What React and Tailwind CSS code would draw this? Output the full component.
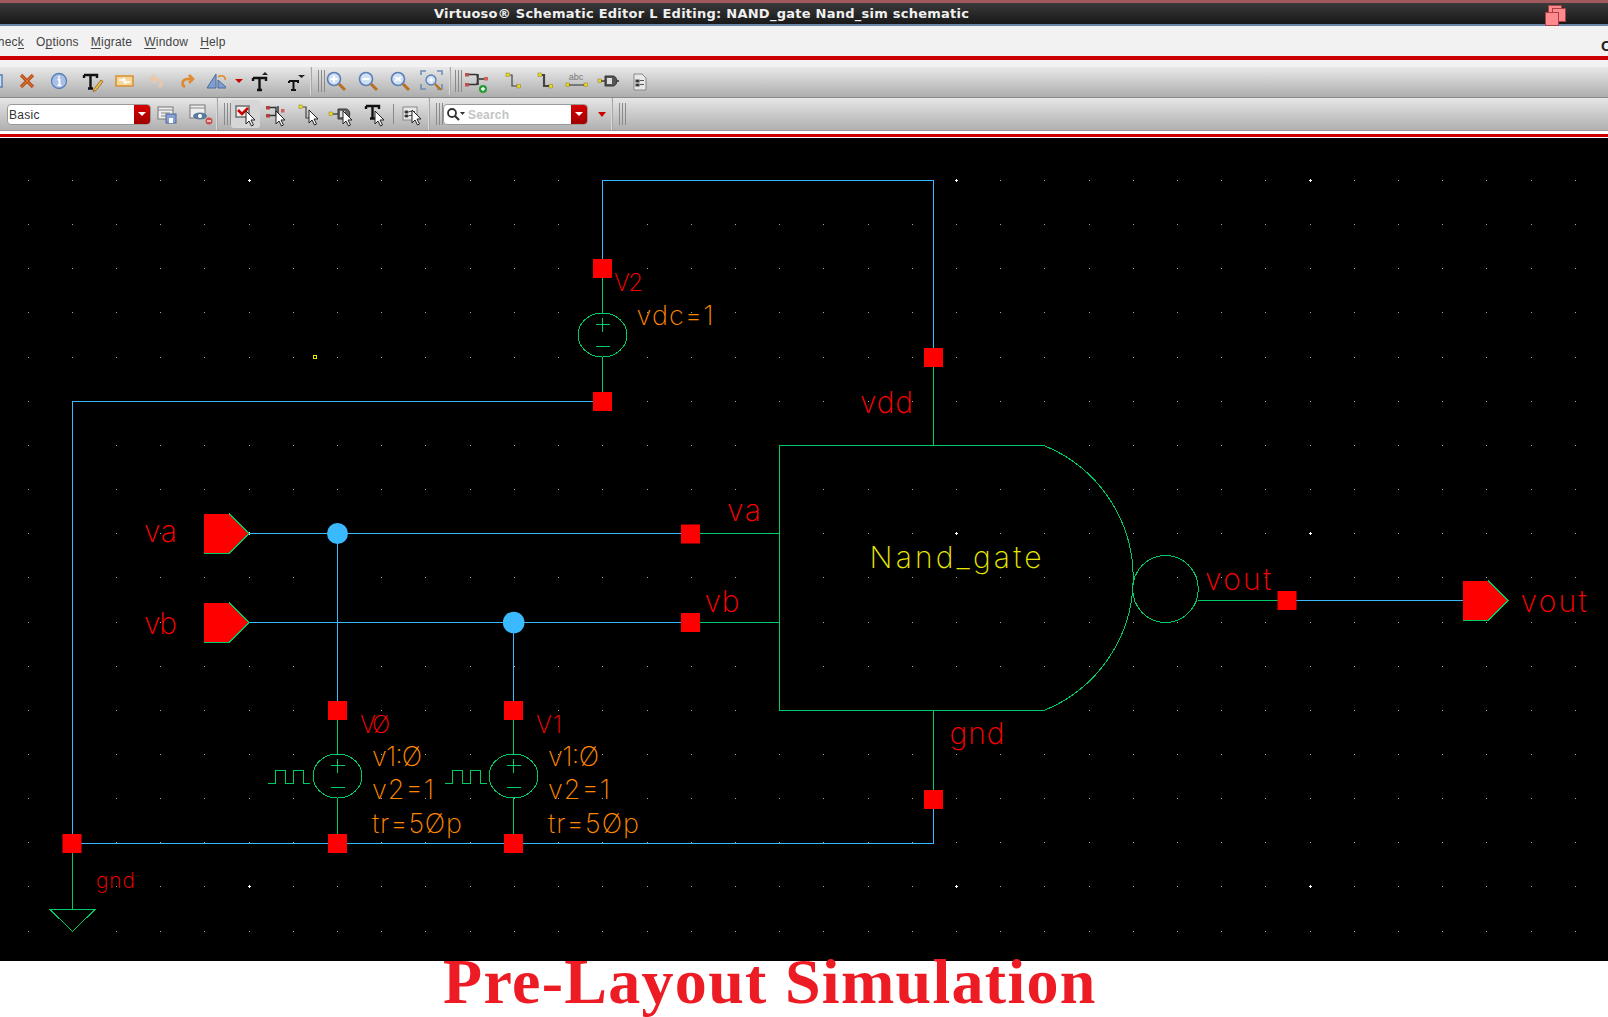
import React from "react";

const BLUE = "#3bb9ff";
const GREEN = "#00cc66";
const RED = "#ff0000";
const ORANGE = "#ff8800";

const Ico = ({ w = 32, h = 30, children, className = "" }) => (
  <svg width={w} height={h} viewBox={`0 0 ${w} ${h}`} className={"shrink-0 " + className}>
    {children}
  </svg>
);

const Grip = () => (
  <div className="flex gap-[2px] h-[22px] shrink-0">
    <div className="w-px bg-[#8a8a8a]" />
    <div className="w-px bg-[#8a8a8a]" />
    <div className="w-px bg-[#8a8a8a]" />
  </div>
);

const Sep = () => <div className="w-[2px] self-stretch bg-[#d9d9d9] border-r border-[#a8a8a8] shrink-0" />;

const Arrow = ({ x = 11, y = 12 }) => (
  <path
    transform={`translate(${x} ${y})`}
    d="M0 0 L0 13 L3 10 L5.5 15 L7.5 14 L5 9 L9 9 Z"
    fill="#fff"
    stroke="#222"
    strokeWidth="1"
  />
);

const Pt = ({ x, y }) => <rect x={x} y={y} width="3.5" height="3.5" fill="#e8d820" stroke="#8a8020" strokeWidth="0.5" />;

const Zoom = ({ kind }) => (
  <Ico>
    <circle cx="13" cy="13" r="6.5" fill="#cfe0f5" stroke="#5a7fb5" strokeWidth="1.6" />
    {kind === "in" && <path d="M9.5 13h7M13 9.5v7" stroke="#fff" strokeWidth="2.2" />}
    {kind === "out" && <path d="M9.5 13h7" stroke="#fff" strokeWidth="2.2" />}
    {kind === "fit" && <path d="M10 11l6 4M10 15l6-4" stroke="#fff" strokeWidth="1.6" />}
    <path d="M18 18l6 6" stroke="#b87020" strokeWidth="3" />
  </Ico>
);

const Toolbar1 = () => (
  <div className="flex items-center h-[31px] pb-[2px] border-b border-[#8a8a8a] bg-gradient-to-b from-[#e9e9e9] to-[#adadad] overflow-hidden">
    <div className="flex items-center ml-[-21px]">
      <Ico>
        <rect x="9" y="9" width="14" height="12" fill="#cfe0f5" stroke="#5a7fb5" strokeWidth="1.5" />
        <path d="M17 12h4v5h-4z" fill="#7fa0d0" />
      </Ico>
      <Ico>
        <path d="M10 9l12 12M22 9L10 21" stroke="#b8501a" strokeWidth="3.2" />
        <path d="M10 9l12 12M22 9L10 21" stroke="#e07a3a" strokeWidth="1" />
      </Ico>
      <Ico w={33}>
        <circle cx="16" cy="15" r="7.5" fill="#a8bfe8" stroke="#5a7fb5" strokeWidth="1.3" />
        <path d="M16 10v1.8M14.5 13.5H16.5V19M14.5 19.3h4" stroke="#fff" strokeWidth="1.8" fill="none" />
      </Ico>
      <Ico>
        <path d="M8 9h13v3M14.5 9v13M12 22.5h5M8 9v3" stroke="#111" strokeWidth="2.4" fill="none" />
        <path d="M18 23l7-9 2 1.5-7 9-3 1z" fill="#f0c040" stroke="#8a5a20" strokeWidth="0.8" />
      </Ico>
      <Ico>
        <rect x="8" y="10" width="17" height="10" fill="#f6d79a" stroke="#d88a2a" strokeWidth="1.4" />
        <path d="M11 14h6l-2-2M22 16h-6l2 2" stroke="#fff" strokeWidth="1.4" fill="none" />
      </Ico>
      <Ico>
        <path d="M19 21c4-2 3-8-3-8h-4M15 9l-4 4 4 4" stroke="#e8c8a8" strokeWidth="2.6" fill="none" />
      </Ico>
      <Ico>
        <path d="M13 21c-4-2-3-8 3-8h4M17 9l4 4-4 4" stroke="#e08a30" strokeWidth="2.6" fill="none" />
      </Ico>
      <Ico w={22}>
        <path d="M12 8L3 22h9zM14 14v8h9z" fill="#7f9fd0" stroke="#4a6a9a" strokeWidth="1" />
        <path d="M14 11c4-3 8 0 7 3" stroke="#e08a30" strokeWidth="1.6" fill="none" />
      </Ico>
      <div className="w-[8px]" />
      <Ico w={10}>
        <path d="M1 13h8l-4 4z" fill="#cc0000" />
      </Ico>
      <Ico w={34}>
        <path d="M9 12h13v3M15.5 12v12M13 24h5M9 12v3" stroke="#111" strokeWidth="2.4" fill="none" />
        <path d="M18 9l3-3 3 3z" fill="#222" />
      </Ico>
      <Ico w={29}>
        <path d="M11 15h9v2M15.5 15v9M13 24h5M11 15v2" stroke="#111" strokeWidth="2" fill="none" />
        <path d="M20 9h7l-3.5 3z" fill="#222" />
      </Ico>
    </div>
    <div className="w-[3px]" />
    <Sep />
    <div className="w-[6px]" />
    <Grip />
    <div className="flex items-center ml-[-4px]">
      <Zoom kind="in" />
      <Zoom kind="out" />
      <Zoom kind="fit" />
      <Ico>
        <path d="M4 9V5h5M20 5h5v4M25 18v5h-5M9 23H4v-5" stroke="#6a8fb5" strokeWidth="1.6" fill="none" />
        <circle cx="14" cy="14" r="5" fill="#cfe0f5" stroke="#5a7fb5" strokeWidth="1.3" />
        <path d="M11.5 14h5M14 11.5v5" stroke="#fff" strokeWidth="1.5" />
        <path d="M18 18l6 6" stroke="#b87020" strokeWidth="2.4" />
      </Ico>
    </div>
    <Sep />
    <div className="w-[4px]" />
    <Grip />
    <div className="w-[2px]" />
    <div className="flex items-center">
      <Ico>
        <g transform="translate(-4 0)">
          <rect x="5" y="7" width="4" height="3.5" fill="#c05050" />
          <rect x="5" y="17" width="4" height="3.5" fill="#c05050" />
          <rect x="24" y="11" width="4" height="3.5" fill="#d06060" />
          <path d="M9 8.5h7c2 0 2 10 0 10H9M18 8v11M19 13h5" stroke="#333" strokeWidth="1.5" fill="none" />
          <circle cx="23" cy="23" r="4" fill="#2a9a3a" />
          <path d="M21 23h4M23 21v4" stroke="#fff" strokeWidth="1.3" />
        </g>
      </Ico>
      <Ico>
        <Pt x={10} y={7} />
        <Pt x={21} y={18.5} />
        <path d="M14 9h2v11h5" stroke="#444" strokeWidth="1.2" fill="none" />
      </Ico>
      <Ico>
        <Pt x={10} y={7} />
        <Pt x={21} y={18.5} />
        <path d="M14 9h2v11h5" stroke="#444" strokeWidth="2.2" fill="none" />
      </Ico>
      <svg width="32" height="30" viewBox="0 0 32 30" className="shrink-0">
        <Pt x={6} y={17} />
        <Pt x={24} y={17} />
        <path d="M9 19h15" stroke="#444" strokeWidth="1.2" />
        <text x="16" y="14" textAnchor="middle" fontSize="9" fill="#777" fontFamily="'Liberation Sans',sans-serif">abc</text>
      </svg>
      <Ico>
        <Pt x={6} y={13} />
        <path d="M9 15h4" stroke="#444" strokeWidth="1.5" />
        <path d="M13 10h8c5 0 5 10 0 10h-8z" fill="#555" stroke="#333" />
        <rect x="15" y="12" width="5" height="6" fill="#ddd" />
        <path d="M25 15h2" stroke="#333" strokeWidth="1.5" />
      </Ico>
      <Ico>
        <path d="M10 8h8l4 4v12H10z" fill="#e8e8e8" stroke="#888" />
        <path d="M12 14h3v2h-3zM12 18h3v2h-3zM16 14.5h4M16 18.5h4" stroke="#555" strokeWidth="1.2" />
      </Ico>
    </div>
  </div>
);

const Combo = ({ w, children }) => (
  <div style={{ width: w }} className="flex h-[21px] rounded-[4px] border border-[#9a9a9a] bg-white overflow-hidden shrink-0">
    <div className="flex-1 flex items-center min-w-0">{children}</div>
    <div className="w-[16px] bg-gradient-to-b from-[#d80000] to-[#a00000] flex items-center justify-center">
      <div className="w-0 h-0 border-x-[4px] border-x-transparent border-t-[4px] border-t-white" />
    </div>
  </div>
);

const Toolbar2 = () => (
  <div className="flex items-center h-[33px] bg-gradient-to-b from-[#e6e6e6] to-[#b0b0b0] border-b border-[#9a9a9a] overflow-hidden">
    <div className="w-[7px]" />
    <Combo w={144}>
      <span className="pl-[1px] pt-[1px] text-[12px] text-[#333] font-['Liberation_Sans',sans-serif] tracking-[0.3px]">Basic</span>
    </Combo>
    <Ico w={32}>
      <rect x="7" y="8" width="15" height="12" fill="#eee" stroke="#777" />
      <path d="M7 11h15M10 14h9M10 17h5" stroke="#888" />
      <rect x="15" y="15" width="10" height="9" fill="#8aa0d0" stroke="#4a6a9a" />
      <rect x="18" y="19" width="4" height="5" fill="#fff" />
    </Ico>
    <Ico w={31}>
      <rect x="7" y="6" width="15" height="13" fill="#eee" stroke="#777" />
      <path d="M7 9h15" stroke="#888" />
      <ellipse cx="17" cy="17" rx="7" ry="3.5" fill="#5a7a9a" />
      <circle cx="17" cy="17" r="2" fill="#fff" />
      <circle cx="26" cy="22" r="3.5" fill="#c85050" />
      <path d="M24 22h4" stroke="#fff" strokeWidth="1.2" />
    </Ico>
    <div className="w-[2px]" />
    <Sep />
    <div className="w-[6px]" />
    <Grip />
    <div className="w-[29px] h-[28px] rounded-[3px] bg-[#d6d6d6] shrink-0 flex items-center justify-center">
      <Ico w={29} h={28}>
        <rect x="5" y="6" width="13" height="11" fill="#eee" stroke="#666" strokeWidth="1.4" />
        <path d="M7 10l4 4 6-6" stroke="#d00000" strokeWidth="2.6" fill="none" />
        <Arrow x={15} y={11} />
      </Ico>
    </div>
    <Ico w={36}>
      <rect x="6" y="7" width="4" height="3.5" fill="#b04040" />
      <rect x="6" y="15" width="4" height="3.5" fill="#b04040" />
      <rect x="21" y="10" width="3.5" height="3.5" fill="#d06060" />
      <path d="M10 8.5h6v8H10M18 7v11" stroke="#333" strokeWidth="1.4" fill="none" />
      <Arrow x={16} y={12} />
    </Ico>
    <Ico w={28}>
      <Pt x={3} y={6} />
      <path d="M7 8h3v11h5" stroke="#444" strokeWidth="1.2" fill="none" />
      <Arrow x={13} y={11} />
    </Ico>
    <Ico w={36}>
      <Pt x={5} y={13} />
      <path d="M9 15h5" stroke="#444" strokeWidth="1.4" />
      <path d="M14 10h8c5 0 5 10 0 10h-8z" fill="#666" stroke="#333" />
      <rect x="16" y="12" width="5" height="6" fill="#ddd" />
      <Arrow x={19} y={12} />
    </Ico>
    <Ico w={30}>
      <path d="M6 7h13v3M12.5 7v12M10 19.5h5M6 7v3" stroke="#111" strokeWidth="2.4" fill="none" />
      <Arrow x={15} y={12} />
    </Ico>
    <div className="w-[3px]" />
    <div className="w-px h-[20px] bg-[#888] shrink-0" />
    <div className="w-[3px]" />
    <Ico w={30}>
      <rect x="6" y="8" width="14" height="13" fill="#e8e8e8" stroke="#888" />
      <path d="M8 12h3v2H8zM8 16h3v2H8zM12 12.5h6M12 16.5h6" stroke="#555" />
      <Arrow x={15} y={11} />
    </Ico>
    <div className="w-[1px]" />
    <Sep />
    <div className="w-[6px]" />
    <Grip />
    <Combo w={145}>
      <Ico w={24} h={21}>
        <circle cx="8" cy="9" r="4" fill="none" stroke="#333" strokeWidth="1.8" />
        <path d="M11 12l4 4" stroke="#333" strokeWidth="2.2" />
        <path d="M16 8h5l-2.5 3z" fill="#333" />
      </Ico>
      <span className="pt-[1px] text-[12px] font-bold text-[#c4c4c4] font-['Liberation_Sans',sans-serif] tracking-[0.2px]">Search</span>
    </Combo>
    <div className="w-[10px]" />
    <div className="w-0 h-0 border-x-[4px] border-x-transparent border-t-[5px] border-t-[#cc0000] shrink-0" />
    <div className="w-[5px]" />
    <Sep />
    <div className="w-[6px]" />
    <Grip />
  </div>
);

const T = ({ x, y, w, s = 24, c = RED, children }) => (
  <text
    x={x}
    y={y}
    textLength={w}
    fontSize={s}
    fill={c}
    fontWeight="200"
    fontFamily="'Inter','Roboto',sans-serif"
  >
    {children}
  </text>
);

const Sq = ({ x, y }) => <rect x={x - 9.5} y={y - 9.5} width="19" height="19" fill={RED} />;

const Pin = ({ x, y }) => (
  <g shapeRendering="crispEdges">
    <path d={`M${x} ${y - 20}H${x + 25}L${x + 45} ${y}L${x + 25} ${y + 20}H${x}Z`} fill={RED} />
    <path d={`M${x} ${y + 20}H${x + 25}L${x + 45} ${y}L${x + 25} ${y - 20}`} fill="none" stroke={GREEN} strokeWidth="1" />
  </g>
);

const Source = ({ x, y }) => (
  <g stroke={GREEN} strokeWidth="1" fill="none" shapeRendering="crispEdges">
    <ellipse cx={x} cy={y} rx="24.5" ry="22" />
    <path d={`M${x - 7} ${y - 10.5}h14M${x} ${y - 17}v14M${x - 7} ${y + 11.5}h14`} />
  </g>
);

const Pulse = ({ x }) => (
  <path
    d={`M${x} 783.5h7v-13.5h10.5v13.5h8v-13.5h9.5v13.5h7`}
    fill="none"
    stroke={GREEN}
    strokeWidth="1"
    shapeRendering="crispEdges"
  />
);

const Schematic = () => {
  const dots = [];
  const majors = [];
  for (let j = 0; j < 18; j++) {
    for (let i = -13; i < 23; i++) {
      const x = Math.round(602.3 + 44.2 * i);
      const y = Math.round(180 + 44.15 * j);
      const isMajor = (i + 8) % 8 === 0 && j % 8 === 0 && i !== 0;
      if (isMajor) majors.push([x, y]);
      else dots.push([x, y]);
    }
  }
  return (
    <svg width="1608" height="823" viewBox="0 138 1608 823" className="block">
      <g fill="#a8a8b0">
        {dots.map(([x, y]) => (
          <rect key={x + "-" + y} x={x} y={y} width="1" height="1" />
        ))}
      </g>
      <g fill="#fff">
        {majors.map(([x, y]) => (
          <path key={x + "-" + y} d={`M${x - 1} ${y}h3v1h-3zM${x} ${y - 1}h1v3h-1z`} />
        ))}
      </g>
      <g stroke={BLUE} strokeWidth="1" fill="none" shapeRendering="crispEdges">
        <path d="M602.5 259V180.5H933.5V348" />
        <path d="M593 401.5H72.5V834" />
        <path d="M72 843.5H933.5V808" />
        <path d="M248 533.5H681" />
        <path d="M248 622.5H681" />
        <path d="M337.5 533V701" />
        <path d="M513.5 622V701" />
        <path d="M1296 600.5H1463" />
      </g>
      <g stroke={GREEN} strokeWidth="1" fill="none" shapeRendering="crispEdges">
        <path d="M602.5 277V313M602.5 357V392" />
        <path d="M933.5 367V445.5" />
        <path d="M933.5 711V790" />
        <path d="M699 533.5H779.5M699 622.5H779.5" />
        <path d="M337.5 720V754M337.5 798V834" />
        <path d="M513.5 720V754M513.5 798V834" />
        <path d="M72.5 853V909" />
        <path d="M1198 600.5H1278" />
        <path d="M1044 445.5H779.5V710.5H1044" />
        <path d="M1044 445.5A143 143 0 0 1 1044 710.5" />
        <ellipse cx="1165.5" cy="589" rx="32.8" ry="33.5" />
        <path d="M50 909.5H95L72.5 931.5Z" />
      </g>
      <Source x={602.5} y={335} />
      <Source x={337.5} y={776} />
      <Source x={513.5} y={776} />
      <Pulse x={268} />
      <Pulse x={445} />
      <Sq x={602.5} y={268.5} />
      <Sq x={602.5} y={401.5} />
      <Sq x={933.5} y={357.5} />
      <Sq x={933.5} y={799.5} />
      <Sq x={690.5} y={534} />
      <Sq x={690.5} y={622.5} />
      <Sq x={337.5} y={710.5} />
      <Sq x={513.5} y={710.5} />
      <Sq x={337.5} y={843.5} />
      <Sq x={513.5} y={843.5} />
      <Sq x={72} y={843.5} />
      <Sq x={1287} y={600.5} />
      <circle cx="337.5" cy="533.5" r="10.5" fill={BLUE} />
      <circle cx="513.7" cy="622.5" r="10.8" fill={BLUE} />
      <Pin x={204} y={533.5} />
      <Pin x={204} y={622.5} />
      <Pin x={1463} y={600.5} />
      <rect x="313.5" y="355.5" width="3" height="3" fill="none" stroke="#e8e800" strokeWidth="1" shapeRendering="crispEdges" />

      <T x={614} y={291} w={29}>V2</T>
      <T x={636.5} y={325} w={77} s={27} c={ORANGE}>vdc=1</T>
      <T x={860} y={413} w={53} s={30}>vdd</T>
      <T x={144} y={542} w={33} s={30}>va</T>
      <T x={144} y={634} w={33} s={30}>vb</T>
      <T x={727} y={521} w={34} s={30}>va</T>
      <T x={704.5} y={612} w={35} s={30}>vb</T>
      <T x={869.5} y={568} w={172} s={30} c="#e8e800">Nand_gate</T>
      <T x={949.5} y={743.5} w={55} s={30}>gnd</T>
      <T x={1205} y={590} w={66} s={30}>vout</T>
      <T x={1520.5} y={611.5} w={66} s={30}>vout</T>
      <T x={96} y={887.5} w={39} s={21}>gnd</T>
      <T x={360} y={733} w={30}>VØ</T>
      <T x={536} y={733} w={26}>V1</T>
      <T x={372} y={766} w={50} s={27} c={ORANGE}>v1:Ø</T>
      <T x={372} y={799} w={62} s={27} c={ORANGE}>v2=1</T>
      <T x={372} y={832.5} w={90} s={27} c={ORANGE}>tr=5Øp</T>
      <T x={548} y={766} w={51} s={27} c={ORANGE}>v1:Ø</T>
      <T x={548} y={799} w={62} s={27} c={ORANGE}>v2=1</T>
      <T x={548} y={832.5} w={91} s={27} c={ORANGE}>tr=5Øp</T>
    </svg>
  );
};

const U = ({ children }) => <span className="underline underline-offset-2">{children}</span>;

export default function App() {
  return (
    <div className="w-[1608px] h-[1017px] overflow-hidden bg-white flex flex-col font-['Liberation_Sans',sans-serif]">
      <div className="h-[3px] bg-[#a05a5e]" />
      <div className="h-[21px] relative bg-gradient-to-b from-[#3a3a3a] to-[#181818] flex items-center pl-[434px]">
        <span className="text-[13px] font-bold text-[#f0f0f0] font-['DejaVu_Sans',sans-serif] whitespace-nowrap tracking-[0.25px]">
          Virtuoso® Schematic Editor L Editing: NAND_gate Nand_sim schematic
        </span>
        <svg width="22" height="22" viewBox="0 0 22 22" className="absolute left-[1545px] top-[2px]">
          <rect x="3.5" y="0.5" width="13" height="13" fill="#ff8a8e" stroke="#a84048" />
          <rect x="7.5" y="3.5" width="13" height="13" fill="#ff8a8e" stroke="#a84048" />
          <rect x="0.5" y="7.5" width="13" height="13" fill="#ff8a8e" stroke="#a84048" />
        </svg>
      </div>
      <div className="h-[2px] bg-[#6b86a8]" />
      <div className="h-[30px] pt-[2px] bg-[#f2f2f2] flex items-center text-[12px] text-[#444] relative overflow-hidden tracking-[0.2px]">
        <div className="flex gap-[12px] ml-[-11px] items-center">
          <span>Chec<U>k</U></span>
          <span>O<U>p</U>tions</span>
          <span><U>M</U>igrate</span>
          <span><U>W</U>indow</span>
          <span><U>H</U>elp</span>
        </div>
        <span className="absolute left-[1601px] top-[9px] text-[15px] font-bold text-[#222]">C</span>
      </div>
      <div className="h-[4px] bg-[#cc0000]" />
      <div className="h-[7px] bg-[#f2f2f2]" />
      <Toolbar1 />
      <Toolbar2 />
      <div className="h-[3px] bg-white" />
      <div className="h-[3px] bg-[#cc0000]" />
      <div className="h-[1px] bg-white" />
      <div className="h-[823px] bg-black shrink-0">
        <Schematic />
      </div>
      <div className="h-[56px] pl-[443px]">
        <div className="text-[64px] leading-[41px] tracking-[1.3px] font-bold text-[#ed1c24] font-['Liberation_Serif',serif] whitespace-nowrap">
          Pre-Layout Simulation
        </div>
      </div>
    </div>
  );
}
